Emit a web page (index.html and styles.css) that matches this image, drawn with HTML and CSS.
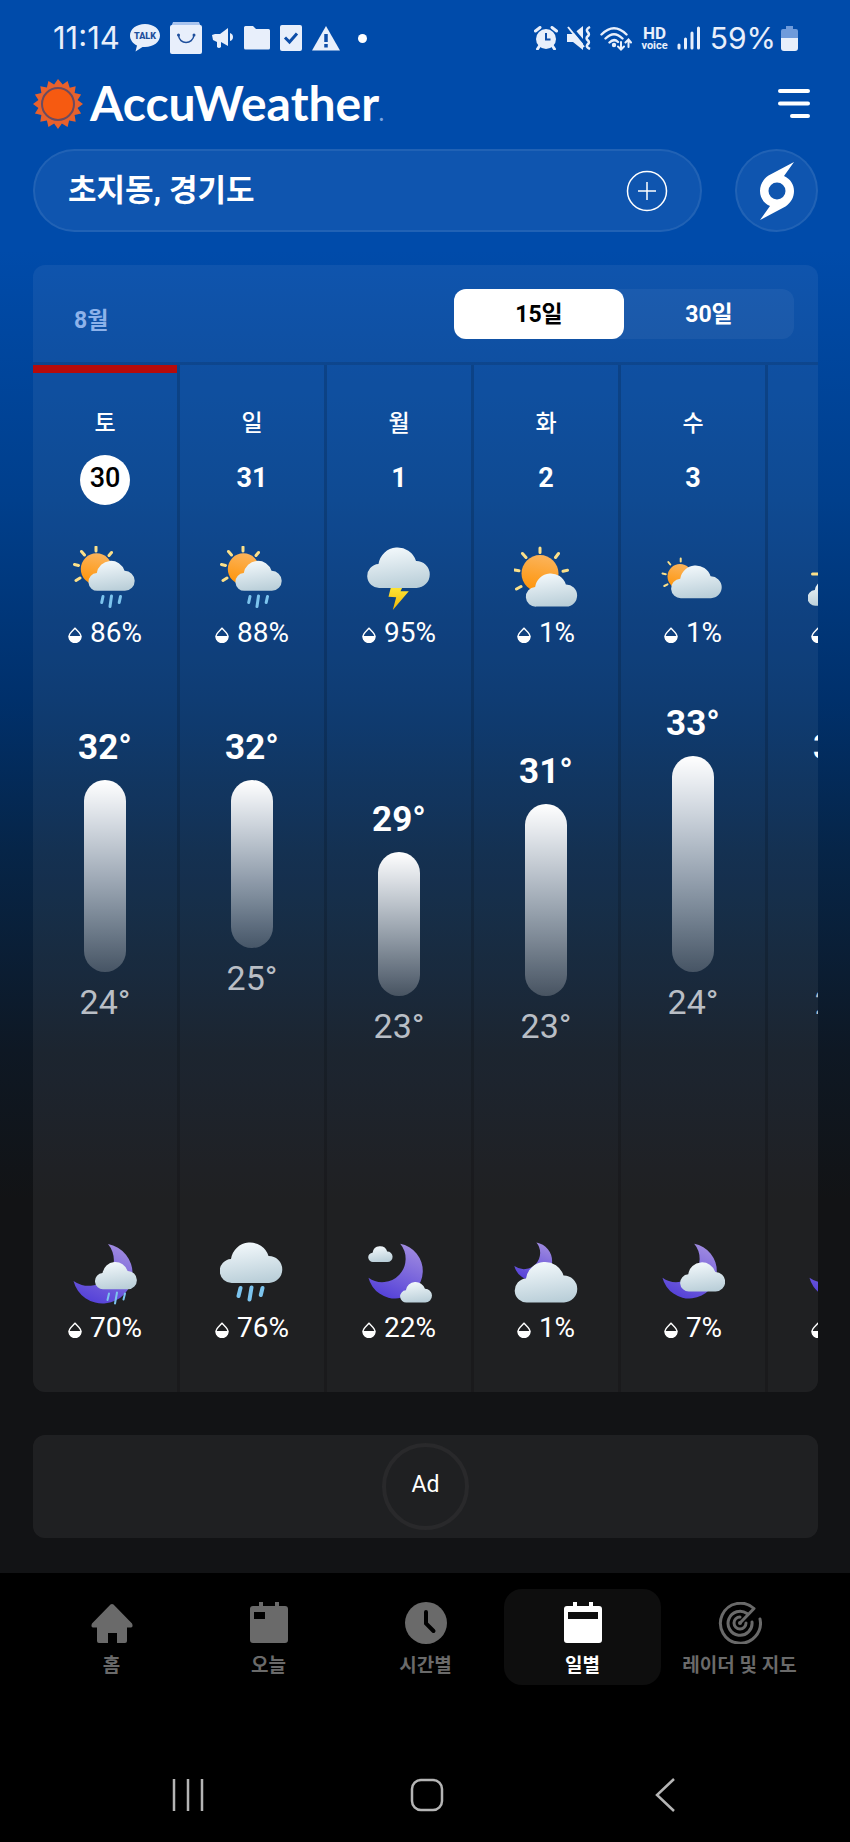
FILE: index.html
```html
<!DOCTYPE html>
<html lang="ko">
<head>
    <meta charset="UTF-8">
    <meta name="viewport" content="width=device-width, initial-scale=1.0">
    <title>AccuWeather</title>
    <link rel="stylesheet" href="styles.css">
</head>
<body>
    <!-- Shared shapes -->
    <svg class="sprite" width="0" height="0" aria-hidden="true">
        <defs>
            <linearGradient id="cloud-fill" x1="0.4" y1="0" x2="0.6" y2="1">
                <stop offset="0" stop-color="#f2f8fb"/>
                <stop offset="1" stop-color="#b9ced8"/>
            </linearGradient>
            <linearGradient id="sun-fill" x1="0.6" y1="0" x2="0.4" y2="1">
                <stop offset="0" stop-color="#fbb45c"/>
                <stop offset="1" stop-color="#ff9408"/>
            </linearGradient>
            <linearGradient id="moon-fill" x1="0.7" y1="0" x2="0.3" y2="1">
                <stop offset="0" stop-color="#a08be0"/>
                <stop offset="1" stop-color="#5340d8"/>
            </linearGradient>
            <linearGradient id="bolt-fill" x1="0" y1="0" x2="0" y2="1">
                <stop offset="0" stop-color="#ffe83a"/>
                <stop offset="1" stop-color="#f2b705"/>
            </linearGradient>
            <path id="cloud" fill="url(#cloud-fill)" d="M12 41A12 12 0 0 1 10.5 17A19.3 19.3 0 0 1 48 14A13.5 13.5 0 0 1 48.5 41Z"/>
            <path id="moon" fill="url(#moon-fill)" d="M35 3A30 30 0 1 1 .5 40A25.5 25.5 0 0 0 35 3Z"/>
            <symbol id="drop" viewBox="0 0 14 16">
                <path d="M7 1.2C9.5 4 13 6.5 13 9.5A6 6 0 0 1 1 9.5C1 6.5 4.5 4 7 1.2Z" fill="none" stroke="#fff" stroke-width="1.4"/>
                <path d="M.6 9H13.4A6.4 6.6 0 0 1 .6 9Z" fill="#fff"/>
            </symbol>
            <symbol id="sun-rain" viewBox="0 0 64 64">
                <circle cx="23.5" cy="23" r="15.7" fill="url(#sun-fill)"/>
                <path class="rays" d="M23 1V5M8.5 5.5L11.5 9M38.5 6.5L36 9.5M1.5 18.5L5.5 19.5M3 34.5L7 32"/>
                <use href="#cloud" transform="translate(16 14.5) scale(.74)"/>
                <path class="rain" d="M30 50.5L28.7 56.5M38.5 50L37 60.5M47.5 50.5L46.2 56.5"/>
            </symbol>
            <symbol id="storm" viewBox="0 0 64 64">
                <path fill="url(#bolt-fill)" d="M24.2 40H36L33.5 45.3H41.8L25.8 64L29.2 51.3L21.5 50.7Z"/>
                <use href="#cloud" transform="translate(1 1)"/>
            </symbol>
            <symbol id="mostly-sunny" viewBox="0 0 64 64">
                <circle cx="26" cy="27.5" r="18.5" fill="url(#sun-fill)"/>
                <path class="rays" d="M26 2V6.5M8.5 7.5L12 11.5M44.5 7.5L41.5 11.5M.5 24L5 24.8M49 25.2L53.5 24.3M2.5 43L7 40.5"/>
                <use href="#cloud" transform="translate(12.5 27) scale(.82)"/>
            </symbol>
            <symbol id="mostly-cloudy" viewBox="0 0 64 64">
                <circle cx="19" cy="30.5" r="12.5" fill="url(#sun-fill)"/>
                <path class="rays thin" d="M19.7 12.5V15.5M7.3 16L9.3 18.5M1.5 27.5L4.8 28.2M3.3 40L6.5 38.3"/>
                <use href="#cloud" transform="translate(10.7 19) scale(.81)"/>
            </symbol>
            <symbol id="hazy-sun" viewBox="0 0 64 64">
                <circle cx="32" cy="30" r="17" fill="url(#sun-fill)"/>
                <path class="rays" d="M4.5 28H10"/>
                <use href="#cloud" transform="translate(0 33) scale(.65)"/>
            </symbol>
            <symbol id="moon-rain" viewBox="0 0 64 64">
                <use href="#moon"/>
                <use href="#cloud" transform="translate(22.5 20.7) scale(.67)"/>
                <path class="rain thin" d="M36 52.5L34.5 59M44 51.5L42 62.5M52 52.5L50.5 58.5"/>
            </symbol>
            <symbol id="rain" viewBox="0 0 64 64">
                <use href="#cloud" transform="translate(.5 1)"/>
                <path class="rain thick" d="M20.5 47L18.5 55M31.5 46.5L29.5 58.5M42.5 47L40.8 54"/>
            </symbol>
            <symbol id="moon-clouds" viewBox="0 0 64 64" overflow="visible">
                <use href="#moon" transform="translate(1 0) scale(.92)"/>
                <use href="#cloud" transform="translate(1.5 5) scale(.39)"/>
                <use href="#cloud" transform="translate(33.5 40.7) scale(.51)"/>
            </symbol>
            <symbol id="night-cloudy" viewBox="0 0 64 64">
                <use href="#moon" transform="translate(0 -.5) scale(.64)"/>
                <use href="#cloud" transform="translate(1.5 20.5)"/>
            </symbol>
            <symbol id="night-partly" viewBox="0 0 64 64">
                <use href="#moon" transform="translate(1 0) scale(.92)"/>
                <use href="#cloud" transform="translate(19.7 21) scale(.72)"/>
            </symbol>
        </defs>
    </svg>

    <div class="app">
        <!-- Phone status bar -->
        <div class="status-bar">
            <div class="status-left">
                <span class="clock">11:14</span>
                <svg width="30" height="30" viewBox="0 0 30 30">
                    <path fill="#e8effb" d="M15 1C6.5 1 0 6 0 12.5C0 17 3 20.5 7 22.5L5.5 28.5L12.5 24H15C23.5 24 30 19 30 12.5S23.5 1 15 1Z"/>
                    <text x="15" y="16" text-anchor="middle" class="talk">TALK</text>
                </svg>
                <svg width="32" height="32" viewBox="0 0 32 32">
                    <path fill="#a9c4ee" d="M3 0H29L31 5H1Z"/>
                    <rect y="3" width="32" height="29" rx="2" fill="#e8effb"/>
                    <path d="M8.5 13C9 23 23 23 24 13" fill="none" stroke="#1e4f9c" stroke-width="1.5"/>
                    <circle cx="8.5" cy="13" r="1.5" fill="#1e4f9c"/>
                    <circle cx="24" cy="13" r="1.5" fill="#1e4f9c"/>
                </svg>
                <svg width="22" height="22" viewBox="0 0 22 22" fill="#e8effb">
                    <path d="M0 8L3 7H8L16 1V19L9 15V20Q7 22 5 20V15L1 13Z"/>
                    <path d="M18 6Q21 7 21 10T18 14Z"/>
                </svg>
                <svg width="26" height="24" viewBox="0 0 26 24" fill="#e8effb"><path d="M1.5 0H9L12 3H24.5Q26 3 26 4.5V22Q26 23.5 24.5 23.5H1.5Q0 23.5 0 22V1.5Q0 0 1.5 0Z"/></svg>
                <svg width="22" height="26" viewBox="0 0 22 26">
                    <rect width="22" height="26" rx="2" fill="#e8effb"/>
                    <path d="M5 12.5L9.5 17L17 8.5" fill="none" stroke="#0d4da8" stroke-width="3"/>
                </svg>
                <svg width="28" height="25" viewBox="0 0 28 25">
                    <path d="M14 0L28 24.5H0Z" fill="#e8effb"/>
                    <path d="M14 8V16M14 18V21.5" stroke="#0d4da8" stroke-width="3.5"/>
                </svg>
                <span class="more-dot"></span>
            </div>
            <div class="status-right">
                <svg width="24" height="24" viewBox="0 0 24 24">
                    <circle cx="12" cy="13" r="10" fill="#e8effb"/>
                    <path d="M1.5 5L6 1.5M22.5 5L18 1.5M5.5 20L3.5 23M18.5 20L20.5 23" stroke="#e8effb" stroke-width="3" stroke-linecap="round"/>
                    <path d="M12 7V13.5H16.5" fill="none" stroke="#0d4da8" stroke-width="2"/>
                </svg>
                <svg width="24" height="24" viewBox="0 0 24 24">
                    <path d="M0 8H6L16 0V24L6 16H0Z" fill="#e8effb"/>
                    <path d="M3 0L20 20" stroke="#004baa" stroke-width="3"/>
                    <path d="M1 1L17 21" stroke="#e8effb" stroke-width="2"/>
                    <path d="M23 1Q18 3.500 21 6.500Q23 8.500 20.500 10.500Q18.500 12.500 21 14.500Q23 16.500 20.500 18.500Q18.500 21 23 23" fill="none" stroke="#e8effb" stroke-width="2.5"/>
                </svg>
                <svg width="32" height="25" viewBox="0 0 32 25" fill="none" stroke="#e8effb" stroke-width="2.4" stroke-linecap="round">
                    <path d="M1.5 8.5Q14 -4 26.5 8.5M5.5 12.5Q14 4 22.5 12.5M9.5 16.5Q14 12 18 16"/>
                    <circle cx="14" cy="19" r="1" fill="#e8effb"/>
                    <path d="M21 16V23M18 20.5L21 23.5L24 20.5M28.5 21V14M25.5 16.5L28.5 13.5L31 16.5" stroke-width="2"/>
                </svg>
                <span class="hd-voice"><span class="hd">HD</span><span class="voice">voice</span></span>
                <svg width="24" height="24" viewBox="0 0 24 24" stroke="#e8effb" stroke-width="3" stroke-linecap="round"><path d="M2 19V22M8.5 13V22M15 7V22M21.5 2V22"/></svg>
                <span class="battery-text">59%</span>
                <svg width="17" height="25" viewBox="0 0 17 25">
                    <path d="M5 0H12V3H15Q17 3 17 5V12H0V5Q0 3 2 3H5Z" fill="#6f9bdb"/>
                    <path d="M0 12H17V22Q17 25 14 25H3Q0 25 0 22Z" fill="#e8effb"/>
                </svg>
            </div>
        </div>

        <header class="header">
            <a href="#" class="brand">
                <svg width="50" height="50" viewBox="-25 -25 50 50">
                    <path fill="#e8612c" d="M0-25L4.7-19.5L9.6-23.1L11.7-16.2L17.7-17.7L16.6-11.1L23.1-9.6L19.6-3.9L25 0L19.6 3.9L23.1 9.6L16.6 11.1L17.7 17.7L11.1 16.6L9.6 23.1L3.9 19.6L0 25L-3.9 19.6L-9.6 23.1L-11.1 16.6L-17.7 17.7L-16.6 11.1L-23.1 9.6L-19.6 3.9L-25 0L-19.6-3.9L-23.1-9.6L-16.6-11.1L-17.7-17.7L-11.1-16.6L-9.6-23.1L-3.9-19.6Z"/>
                    <circle r="16" fill="#f65a11" stroke="#6b4b60" stroke-width="2"/>
                </svg>
                <span class="brand-name">AccuWeather<span class="brand-mark">.</span></span>
            </a>
            <button type="button" class="menu-btn" aria-label="메뉴">
                <svg width="34" height="30" viewBox="0 0 34 30" stroke="#fff" stroke-width="4" stroke-linecap="round"><path d="M3 2H31M3 14.5H31M15 27H31"/></svg>
            </button>
        </header>

        <div class="location-row">
            <button type="button" class="location">
                <span>초지동, 경기도</span>
                <svg width="42" height="42" viewBox="0 0 42 42" fill="none" stroke="#fff" stroke-width="1.5"><circle cx="21" cy="21" r="19.5"/><path d="M21 12V30M12 21H30"/></svg>
            </button>
            <button type="button" class="storm-btn" aria-label="태풍">
                <svg width="36" height="58" viewBox="0 0 36 58">
                    <path fill="#fff" fill-rule="evenodd" d="M35 0L25 14C31.5 17 35 22.5 35 29C35 35.500 32 40.500 26.500 44.500L1 58L11 44C4.5 41 1 35.500 1 29C1 22.500 4 17.500 9.500 13.500ZM18 20.5A8.5 8.5 0 1 0 18 37.5A8.5 8.5 0 1 0 18 20.5Z"/>
                </svg>
            </button>
        </div>

        <!-- Daily forecast -->
        <section class="panel">
            <div class="panel-head">
                <span class="month">8월</span>
                <div class="tabs">
                    <button type="button" class="tab active">15일</button>
                    <button type="button" class="tab">30일</button>
                </div>
            </div>
            <div class="days">
                <div class="day today">
                    <span class="weekday">토</span>
                    <span class="date">30</span>
                    <svg class="weather"><use href="#sun-rain"/></svg>
                    <span class="chance"><svg class="drop"><use href="#drop"/></svg>86%</span>
                    <div class="range" style="--high: 32; --low: 24">
                        <span class="high">32°</span>
                        <span class="bar"></span>
                        <span class="low">24°</span>
                    </div>
                    <svg class="weather"><use href="#moon-rain"/></svg>
                    <span class="chance"><svg class="drop"><use href="#drop"/></svg>70%</span>
                </div>
                <div class="day">
                    <span class="weekday">일</span>
                    <span class="date">31</span>
                    <svg class="weather"><use href="#sun-rain"/></svg>
                    <span class="chance"><svg class="drop"><use href="#drop"/></svg>88%</span>
                    <div class="range" style="--high: 32; --low: 25">
                        <span class="high">32°</span>
                        <span class="bar"></span>
                        <span class="low">25°</span>
                    </div>
                    <svg class="weather"><use href="#rain"/></svg>
                    <span class="chance"><svg class="drop"><use href="#drop"/></svg>76%</span>
                </div>
                <div class="day">
                    <span class="weekday">월</span>
                    <span class="date">1</span>
                    <svg class="weather"><use href="#storm"/></svg>
                    <span class="chance"><svg class="drop"><use href="#drop"/></svg>95%</span>
                    <div class="range" style="--high: 29; --low: 23">
                        <span class="high">29°</span>
                        <span class="bar"></span>
                        <span class="low">23°</span>
                    </div>
                    <svg class="weather"><use href="#moon-clouds"/></svg>
                    <span class="chance"><svg class="drop"><use href="#drop"/></svg>22%</span>
                </div>
                <div class="day">
                    <span class="weekday">화</span>
                    <span class="date">2</span>
                    <svg class="weather"><use href="#mostly-sunny"/></svg>
                    <span class="chance"><svg class="drop"><use href="#drop"/></svg>1%</span>
                    <div class="range" style="--high: 31; --low: 23">
                        <span class="high">31°</span>
                        <span class="bar"></span>
                        <span class="low">23°</span>
                    </div>
                    <svg class="weather"><use href="#night-cloudy"/></svg>
                    <span class="chance"><svg class="drop"><use href="#drop"/></svg>1%</span>
                </div>
                <div class="day">
                    <span class="weekday">수</span>
                    <span class="date">3</span>
                    <svg class="weather"><use href="#mostly-cloudy"/></svg>
                    <span class="chance"><svg class="drop"><use href="#drop"/></svg>1%</span>
                    <div class="range" style="--high: 33; --low: 24">
                        <span class="high">33°</span>
                        <span class="bar"></span>
                        <span class="low">24°</span>
                    </div>
                    <svg class="weather"><use href="#night-partly"/></svg>
                    <span class="chance"><svg class="drop"><use href="#drop"/></svg>7%</span>
                </div>
                <div class="day">
                    <span class="weekday">목</span>
                    <span class="date">4</span>
                    <svg class="weather"><use href="#hazy-sun"/></svg>
                    <span class="chance"><svg class="drop"><use href="#drop"/></svg>7%</span>
                    <div class="range" style="--high: 32; --low: 24">
                        <span class="high">32°</span>
                        <span class="bar"></span>
                        <span class="low">24°</span>
                    </div>
                    <svg class="weather"><use href="#night-partly"/></svg>
                    <span class="chance"><svg class="drop"><use href="#drop"/></svg>7%</span>
                </div>
            </div>
        </section>

        <div class="ad"><span class="ad-ring">Ad</span></div>
    </div>

    <footer class="footer">
        <nav class="nav">
            <a href="#" class="nav-item">
                <svg width="42" height="42" viewBox="0 0 42 42" fill="currentColor"><path d="M19.5 2.5Q21 1.5 22.5 2.5L41 21.5Q42.5 25 40 25.5H36V39Q36 41 34 41H26V31H17V41H8Q6 41 6 39V25.5H2Q-.5 25 1 21.5Z"/></svg>
                <span>홈</span>
            </a>
            <a href="#" class="nav-item">
                <svg width="42" height="42" viewBox="0 0 42 42" fill="currentColor"><path fill-rule="evenodd" d="M11 0H15V4H27V0H31V4H37Q40 4 40 7V38Q40 41 37 41H5Q2 41 2 38V7Q2 4 5 4H11ZM6 10V17H17V10Z"/></svg>
                <span>오늘</span>
            </a>
            <a href="#" class="nav-item">
                <svg width="42" height="42" viewBox="0 0 42 42"><circle cx="21" cy="21" r="21" fill="currentColor"/><path d="M21 10V21.5L28.5 29" fill="none" stroke="#000" stroke-width="4" stroke-linecap="round"/></svg>
                <span>시간별</span>
            </a>
            <a href="#" class="nav-item active">
                <svg width="42" height="42" viewBox="0 0 42 42" fill="currentColor"><path fill-rule="evenodd" d="M11 0H15V4H27V0H31V4H37Q40 4 40 7V38Q40 41 37 41H5Q2 41 2 38V7Q2 4 5 4H11ZM6 10V17H36V10Z"/></svg>
                <span>일별</span>
            </a>
            <a href="#" class="nav-item">
                <svg width="44" height="42" viewBox="0 0 44 42" fill="none" stroke="currentColor" stroke-width="3" stroke-linecap="round" stroke-linejoin="round">
                    <path d="M42 17A20 20 0 1 1 36 6.500L23 20M29 11.500A12 12 0 1 0 34 20"/>
                    <path d="M22 15A6 6 0 1 0 28 21"/>
                    <circle cx="22" cy="21" r="2" fill="currentColor" stroke="none"/>
                </svg>
                <span>레이더 및 지도</span>
            </a>
        </nav>
        <div class="system-keys">
            <button type="button" aria-label="최근 앱"><svg width="34" height="34" viewBox="0 0 34 34" stroke="#b5b5b5" stroke-width="2.5"><path d="M3 1V33M17 1V33M31 1V33"/></svg></button>
            <button type="button" aria-label="홈 화면"><svg width="34" height="34" viewBox="0 0 34 34" fill="none" stroke="#b5b5b5" stroke-width="2.5"><rect x="2" y="2" width="30" height="30" rx="9"/></svg></button>
            <button type="button" aria-label="뒤로"><svg width="34" height="34" viewBox="0 0 34 34" fill="none" stroke="#b5b5b5" stroke-width="2.5"><path d="M26 1L9 17L26 33"/></svg></button>
        </div>
    </footer>
</body>
</html>
```

FILE: styles.css
```css
* {
    box-sizing: border-box;
}
body {
    margin: 0;
    min-height: 100vh;
    display: flex;
    flex-direction: column;
    background: #000;
    color: #fff;
    font-family: Roboto, 'Noto Sans CJK KR', sans-serif;
}
button {
    border: none;
    padding: 0;
    background: none;
    color: inherit;
    font-family: inherit;
    cursor: pointer;
}
a {
    color: inherit;
    text-decoration: none;
}
svg {
    display: block;
    flex-shrink: 0;
}
.app {
    padding: 0 32px 35px 33px;
    background: #121315 linear-gradient(#004baa 250px, #003f8c 500px, #00306b 700px, #062548 850px, #0e1824 1050px, #121315 1200px);
}

/* Status bar */
.status-bar {
    height: 76px;
    padding: 0 20px;
    display: flex;
    justify-content: space-between;
    align-items: center;
    color: #e8effb;
}
.status-left,
.status-right {
    display: flex;
    align-items: center;
}
.status-left {
    gap: 10px;
}
.status-right {
    gap: 9px;
}
.clock,
.battery-text {
    font-family: Inter, sans-serif;
    font-size: 31px;
    font-weight: 400;
    line-height: 36px;
}
.battery-text {
    font-size: 30px;
    margin-right: -4px;
}
.more-dot {
    width: 9px;
    height: 9px;
    margin-left: 8px;
    border-radius: 50%;
    background: #fff;
}
.talk {
    font-size: 9px;
    font-weight: 900;
    fill: #1e4f9c;
}
.hd-voice {
    display: flex;
    flex-direction: column;
    align-items: center;
    font-weight: 700;
}
.hd {
    font-size: 17px;
    line-height: 15px;
}
.voice {
    font-size: 11px;
    line-height: 9px;
}

/* Header */
.header {
    height: 56px;
    margin-bottom: 17px;
    display: flex;
    justify-content: space-between;
    align-items: center;
}
.brand {
    display: flex;
    align-items: center;
    gap: 7px;
}
.brand-name {
    padding-top: 7px;
    font-family: Lato, sans-serif;
    font-size: 48px;
    font-weight: 700;
    line-height: 56px;
}
.brand-mark {
    font-size: 20px;
    color: #7fa6e0;
}
.menu-btn {
    margin-right: 7px;
}
.location-row {
    display: flex;
    gap: 33px;
    margin-bottom: 33px;
}
.location,
.storm-btn {
    height: 83px;
    border: 2px solid rgba(255, 255, 255, 0.08);
    border-radius: 42px;
    background: rgba(255, 255, 255, 0.06);
}
.location {
    flex: 1;
    display: flex;
    justify-content: space-between;
    align-items: center;
    padding: 0 32px 0 33px;
    font-size: 31px;
    font-weight: 700;
    line-height: 40px;
}
.storm-btn {
    width: 83px;
    display: flex;
    justify-content: center;
    align-items: center;
}

/* Forecast panel */
.panel {
    margin-bottom: 43px;
    border-radius: 12px;
    background: rgba(255, 255, 255, 0.06);
    overflow: hidden;
}
.panel-head {
    display: flex;
    justify-content: space-between;
    align-items: center;
    padding: 24px 24px 23px 41px;
    border-bottom: 3px solid rgba(0, 0, 0, 0.12);
}
.month {
    padding-top: 8px;
    font-size: 23px;
    font-weight: 700;
    color: #8db2ea;
}
.tabs {
    display: flex;
    width: 340px;
    border-radius: 12px;
    background: rgba(255, 255, 255, 0.05);
}
.tab {
    flex: 1;
    height: 50px;
    padding-bottom: 5px;
    border-radius: 12px;
    font-size: 23px;
    font-weight: 700;
}
.tab.active {
    background: #fff;
    color: #000;
}
.days {
    display: flex;
    overflow: hidden;
}
.day {
    flex: 0 0 147px;
    display: flex;
    flex-direction: column;
    align-items: center;
    padding: 47px 0 49px;
    border-right: 3px solid rgba(0, 0, 0, 0.16);
}
.day.today {
    box-shadow: inset 0 8px #b60b0b;
}
.weekday {
    margin-bottom: 19px;
    font-size: 23px;
    font-weight: 500;
    line-height: 24px;
}
.date {
    width: 50px;
    height: 50px;
    margin-bottom: 41px;
    border-radius: 50%;
    font-size: 27px;
    font-weight: 700;
    line-height: 47px;
    text-align: center;
}
.today .date {
    background: #fff;
    color: #000;
    font-weight: 500;
}
.weather {
    width: 64px;
    height: 64px;
    margin-bottom: 8px;
    overflow: visible;
}
.rays {
    fill: none;
    stroke: #fbe08a;
    stroke-width: 3;
    stroke-linecap: round;
}
.rays.thin {
    stroke-width: 2;
}
.rain {
    fill: none;
    stroke: #7cc4ee;
    stroke-width: 3;
    stroke-linecap: round;
}
.rain.thin {
    stroke-width: 2;
}
.rain.thick {
    stroke-width: 4;
}
.chance {
    display: flex;
    align-items: center;
    gap: 8px;
    font-size: 28px;
    line-height: 30px;
}
.drop {
    width: 14px;
    height: 16px;
    margin-top: 4px;
}

/* One degree is 24px tall, the scale starts at 33 */
.range {
    height: 537px;
    margin-top: 56px;
    padding-top: calc((33 - var(--high)) * 24px);
    display: flex;
    flex-direction: column;
    align-items: center;
    line-height: 40px;
}
.high {
    font-size: 35px;
    font-weight: 700;
}
.bar {
    width: 42px;
    height: calc((var(--high) - var(--low)) * 24px);
    margin: 12px 0 10px;
    border-radius: 21px;
    background: linear-gradient(#fff, rgba(255, 255, 255, 0.2));
}
.low {
    font-size: 34px;
    font-weight: 400;
    color: #b9bec5;
}

.ad {
    display: flex;
    justify-content: center;
    padding: 8px;
    border-radius: 12px;
    background: rgba(255, 255, 255, 0.06);
}
.ad-ring {
    width: 87px;
    height: 87px;
    border: 4px solid #29292b;
    border-radius: 50%;
    font-size: 23px;
    line-height: 76px;
    text-align: center;
}

/* Bottom navigation */
.footer {
    flex: 1;
    padding: 16px 32px 0 33px;
    background: #000;
}
.nav {
    display: grid;
    grid-template-columns: repeat(5, 1fr);
}
.nav-item {
    height: 96px;
    padding-top: 13px;
    display: flex;
    flex-direction: column;
    align-items: center;
    gap: 8px;
    border-radius: 18px;
    color: #6a6a6a;
    font-size: 19px;
    font-weight: 700;
    line-height: 28px;
    white-space: nowrap;
}
.nav-item.active {
    background: #0e0e0e;
    color: #fff;
}
.system-keys {
    display: flex;
    justify-content: space-between;
    padding: 93px 136px 30px 138px;
}
```
